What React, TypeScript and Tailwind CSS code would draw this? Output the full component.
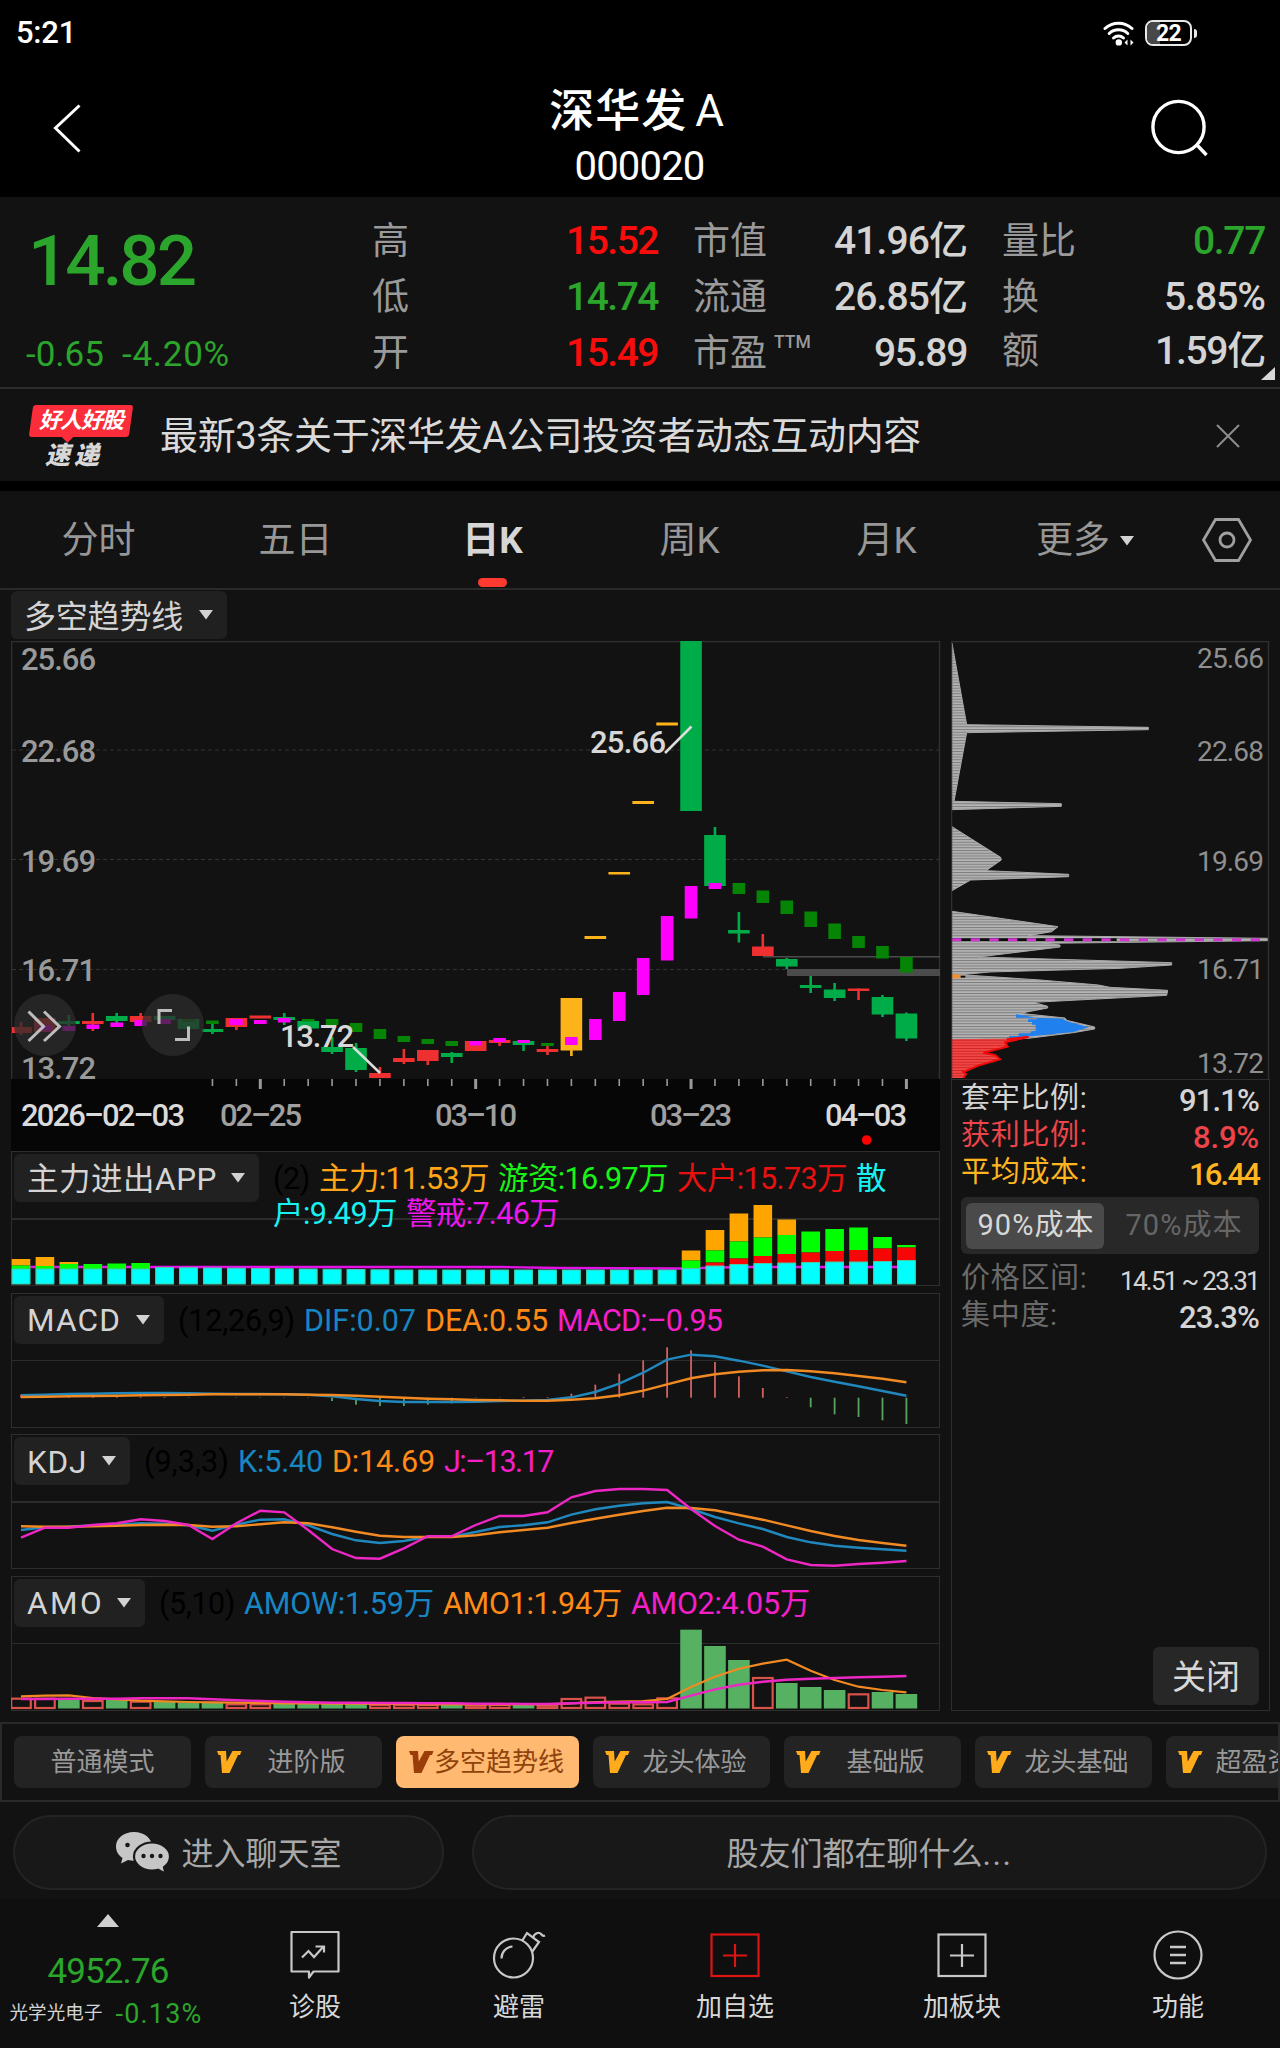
import { useLayoutEffect, useRef, useState } from "react";
import type { ReactNode } from "react";

const FONT = "font-['Roboto','Noto_Sans_CJK_SC',sans-serif]";

/** One line of text whose letter spacing is tuned so that it is `w` pixels wide. */
function Fit({ w, className = "", children }: { w: number; className?: string; children: string }) {
  const ref = useRef<HTMLSpanElement>(null);
  const [gap, setGap] = useState(0);
  useLayoutEffect(() => {
    const el = ref.current;
    if (!el) return;
    el.style.letterSpacing = "0px";
    setGap((w - el.getBoundingClientRect().width) / children.length);
    el.style.letterSpacing = "";
  }, [w, children]);
  return (
    <span ref={ref} className={`inline-block whitespace-pre ${className}`} style={{ letterSpacing: `${gap}px` }}>
      {children}
    </span>
  );
}

const X = (i: number) => 21 + 23.93 * i;

/* ---------- header ---------- */

function StatusBar() {
  return (
    <div className="flex h-[66px] items-center justify-between pl-4 pr-[83px] text-white">
      <Fit w={60} className="text-[31px] font-medium">5:21</Fit>
      <div className="flex items-center gap-[10px]">
        <svg width="32" height="26" viewBox="0 0 32 26" fill="none" stroke="#fff" strokeWidth="3" strokeLinecap="round">
          <path d="M2 8.5a20 20 0 0 1 27 0" />
          <path d="M6.2 13.5a13.5 13.5 0 0 1 18.6 0" />
          <path d="M10.5 18a7.5 7.5 0 0 1 10 0" />
          <circle cx="15.8" cy="22.4" r="1.7" fill="#fff" />
          <path d="M24.5 19.5l-3 3 3 3zM27.5 19.5l3 3-3 3z" fill="#fff" stroke="none" />
        </svg>
        <div className="flex items-center gap-[2px]">
          <div className="relative flex h-[26px] w-[47px] items-center justify-center overflow-hidden rounded-[8px] border-2 border-[#e8e8e8] text-[23px] font-bold">
            <div className="absolute inset-y-0 left-0 w-[13px] bg-[#484848]" />
            <Fit w={25} className="relative leading-none">22</Fit>
          </div>
          <div className="h-[9px] w-[3px] rounded-r bg-[#e8e8e8]" />
        </div>
      </div>
    </div>
  );
}

function TitleBar() {
  return (
    <div className="flex h-[131px] items-start justify-between pl-[52px] pr-[70px] text-white">
      <svg className="mt-[36px]" width="32" height="52" viewBox="0 0 32 52" fill="none" stroke="#fff" strokeWidth="3">
        <path d="M27.5 3.5L3.5 26l24 23.5" />
      </svg>
      <div className="flex flex-col items-center pl-[39px] pt-[17px]">
        <div className="flex h-[56px] items-center gap-[8px] text-[45px] font-medium leading-none">
          <Fit w={138}>深华发</Fit>
          <span className="text-[44px] font-normal">A</span>
        </div>
        <Fit w={130} className="ml-[6px] mt-[8px] text-[40px] leading-[40px]">000020</Fit>
      </div>
      <svg className="mt-[32px]" width="60" height="62" viewBox="0 0 60 62" fill="none" stroke="#fff" strokeWidth="3.4">
        <circle cx="28.500" cy="29" r="25.6" />
        <path d="M46.500 46.500l10 10.500" />
      </svg>
    </div>
  );
}

type Quote = { label: string; value: string; w: number; tone: string; sup?: string };
const quotes: Quote[][] = [
  [
    { label: "高", value: "15.52", w: 92, tone: "text-[#f80c0c]" },
    { label: "低", value: "14.74", w: 92, tone: "text-[#2ba52b]" },
    { label: "开", value: "15.49", w: 92, tone: "text-[#f80c0c]" },
  ],
  [
    { label: "市值", value: "41.96亿", w: 133, tone: "text-[#d4d4d4]" },
    { label: "流通", value: "26.85亿", w: 133, tone: "text-[#d4d4d4]" },
    { label: "市盈", value: "95.89", w: 93, tone: "text-[#d4d4d4]", sup: "TTM" },
  ],
  [
    { label: "量比", value: "0.77", w: 72, tone: "text-[#2ba52b]" },
    { label: "换", value: "5.85%", w: 101, tone: "text-[#d4d4d4]" },
    { label: "额", value: "1.59亿", w: 110, tone: "text-[#d4d4d4]" },
  ],
];

function QuotePanel() {
  const cols = ["w-[286px]", "w-[274px]", "w-[263px]"];
  return (
    <section className="relative flex h-[192px] border-b-2 border-[#2c2c2c] bg-[#121212]">
      <div className="w-[372px] pl-[28px] text-[#2ba52b]">
        <Fit w={166} className="mt-[28px] text-[71px] font-medium leading-[72px]">14.82</Fit>
        <div className="-ml-[2px] mt-[40px] flex gap-[18px] text-[35px] leading-[36px]">
          <Fit w={78}>-0.65</Fit>
          <Fit w={108}>-4.20%</Fit>
        </div>
      </div>
      <div className="flex gap-[35px] pt-[16px]">
        {quotes.map((col, c) => (
          <div key={c} className={cols[c]}>
            {col.map((q, r) => (
              <div key={q.label} className={`flex h-[56px] items-center justify-between text-[39px] leading-none ${c === 2 && r === 2 ? "-mt-[2px]" : ""}`}>
                <span className="flex items-start text-[37px] text-[#9a9a9a]">
                  {q.label}
                  {q.sup && <span className="ml-[7px] -mt-px text-[17.500px] font-medium">{q.sup}</span>}
                </span>
                <Fit w={q.w} className={`font-medium ${q.tone}`}>{q.value}</Fit>
              </div>
            ))}
          </div>
        ))}
      </div>
      <svg className="absolute bottom-[7px] right-[5px]" width="14" height="13" viewBox="0 0 14 13">
        <path d="M14 0v13H0z" fill="#d8d8d8" />
      </svg>
    </section>
  );
}

function NewsBar() {
  return (
    <section className="flex h-[92px] items-center bg-[#121212] pl-[29px] pt-[2px]">
      <div className="flex w-[104px] flex-col items-center pt-[2px]">
        <div className="relative flex h-[32px] w-[100px] items-center justify-center">
          <div className="absolute inset-0 -skew-x-[8deg] rounded-[3px] bg-[#fb2d3a]" />
          <div className="absolute -bottom-[4px] left-[32px] size-[9px] rotate-45 bg-[#fb2d3a]" />
          <span className="relative text-[22px] font-bold italic leading-none tracking-[-1px] text-white">好人好股</span>
        </div>
        <Fit w={58} className="mt-[6px] -ml-[14px] text-[25px] font-black italic leading-[26px] text-[#d8d8d8]">速递</Fit>
      </div>
      <Fit w={761} className="ml-[27px] text-[38px] leading-none text-[#dadada]">最新3条关于深华发A公司投资者动态互动内容</Fit>
      <svg className="ml-auto mr-[39px]" width="26" height="26" viewBox="0 0 26 26" stroke="#8c8c8c" strokeWidth="2">
        <path d="M2 2l22 22M24 2L2 24" />
      </svg>
    </section>
  );
}

function Caret({ className = "" }: { className?: string }) {
  return (
    <svg className={className} width="14" height="10" viewBox="0 0 14 10">
      <path d="M0 0h14L7 9.500z" fill="#d2d2d2" />
    </svg>
  );
}

function Tabs() {
  return (
    <nav className="mt-[10px] flex h-[99px] items-center border-b-2 border-[#2a2a2a] bg-[#121212] text-[37px] leading-none text-[#979797]">
      {["分时", "五日", "日K", "周K", "月K"].map((t) => (
        <div key={t} className="relative flex h-full w-[197px] items-center justify-center pt-[2px]">
          <span className={t === "日K" ? "font-bold text-[#d6d6d6]" : ""}>{t}</span>
          {t === "日K" && <div className="absolute bottom-px h-[9px] w-[29px] rounded-full bg-[#fd3a30]" />}
        </div>
      ))}
      <div className="ml-[51px] flex items-center gap-[10px] pt-[2px]">
        更多
        <Caret />
      </div>
      <svg className="ml-[67px]" width="52" height="46" viewBox="0 0 52 46" fill="none" stroke="#a0a0a0" strokeWidth="2.800">
        <path d="M14.500 2.500h23L49.500 23 37.500 43.500h-23L2.500 23z" />
        <circle cx="26" cy="23" r="7" />
      </svg>
    </nav>
  );
}

/* ---------- candlestick chart ---------- */

type Candle = { i: number; c: string; b: [number, number]; w?: [number, number] };
const R = "#ee3030";
const G = "#00ac48";
const O = "#ffb31a";
const candles: Candle[] = [
  { i: 0, c: R, b: [1027, 1033], w: [1022, 1035] },
  { i: 1, c: R, b: [1018, 1032] },
  { i: 2, c: G, b: [1021, 1024], w: [1015, 1031] },
  { i: 3, c: R, b: [1021, 1024], w: [1013, 1031] },
  { i: 4, c: G, b: [1016, 1021], w: [1013, 1025] },
  { i: 5, c: R, b: [1016, 1022], w: [1013, 1022] },
  { i: 6, c: G, b: [1016, 1020] },
  { i: 7, c: G, b: [1019, 1029] },
  { i: 8, c: G, b: [1029, 1032], w: [1024, 1034] },
  { i: 9, c: R, b: [1018, 1027], w: [1018, 1030] },
  { i: 10, c: R, b: [1015.5, 1018.5] },
  { i: 11, c: G, b: [1017, 1020], w: [1013, 1025] },
  { i: 12, c: G, b: [1021, 1028.5] },
  { i: 13, c: G, b: [1047, 1052], w: [1037, 1054] },
  { i: 14, c: G, b: [1048, 1070], w: [1043, 1072] },
  { i: 15, c: R, b: [1073, 1078], w: [1067, 1078] },
  { i: 16, c: R, b: [1058, 1062], w: [1049, 1064] },
  { i: 17, c: R, b: [1050, 1061], w: [1050, 1065] },
  { i: 18, c: G, b: [1053, 1057], w: [1052, 1063] },
  { i: 19, c: R, b: [1041, 1051] },
  { i: 20, c: R, b: [1040, 1043], w: [1038, 1046] },
  { i: 21, c: G, b: [1041, 1045], w: [1040, 1051] },
  { i: 22, c: R, b: [1049, 1052], w: [1044, 1055] },
  { i: 23, c: O, b: [998, 1050.5], w: [998, 1056] },
  { i: 24, c: O, b: [936, 939] },
  { i: 25, c: O, b: [872, 874.5] },
  { i: 26, c: O, b: [801, 804] },
  { i: 27, c: O, b: [722.5, 725.5] },
  { i: 28, c: G, b: [641, 811] },
  { i: 29, c: G, b: [835, 886], w: [827, 886] },
  { i: 30, c: G, b: [930, 933.5], w: [912, 942.5] },
  { i: 31, c: R, b: [946.5, 956], w: [934, 956] },
  { i: 32, c: G, b: [959, 966.5], w: [958, 969] },
  { i: 33, c: G, b: [985, 988], w: [976, 993] },
  { i: 34, c: G, b: [989.5, 998], w: [983, 1001] },
  { i: 35, c: R, b: [988.5, 991], w: [988.5, 1000] },
  { i: 36, c: G, b: [997, 1014.5], w: [995, 1017] },
  { i: 37, c: G, b: [1013.5, 1038.5], w: [1012.5, 1041] },
];
const M = "#ff00ff";
const D = "#058405";
const trend: [number, string, number, number][] = [
  [1, M, 1025, 1031], [2, M, 1026, 1031], [3, M, 1024.5, 1029], [4, M, 1022.5, 1027], [5, M, 1020, 1026], [6, M, 1019, 1024],
  [7, D, 1019, 1022], [8, D, 1020.5, 1024], [9, M, 1019, 1025], [10, M, 1020, 1024], [11, M, 1018, 1022.5],
  [12, D, 1019, 1021.5], [13, D, 1019, 1025], [14, D, 1023, 1032], [15, D, 1029, 1039], [16, D, 1036, 1042],
  [17, D, 1039, 1044], [18, D, 1041, 1046], [19, M, 1041, 1045.5], [20, M, 1038, 1042], [21, M, 1040, 1043], [22, D, 1043, 1046],
  [23, M, 1037, 1045], [24, M, 1019, 1040], [25, M, 992, 1021], [26, M, 958, 995], [27, M, 916, 960.5], [28, M, 886, 918.5],
  [29, M, 883, 889], [30, D, 883, 894], [31, D, 890.5, 903], [32, D, 900.5, 914], [33, D, 911.5, 927], [34, D, 923.5, 939],
  [35, D, 936, 948], [36, D, 946, 958.5], [37, D, 957, 972.5],
];
const leftAxis: [string, number][] = [["25.66", 658.5], ["22.68", 751], ["19.69", 860.5], ["16.71", 969.5], ["13.72", 1068]];
const dates: [string, number, number, string][] = [
  ["2026-02-03", 21, 164, "#dadada"], ["02-25", 220, 82, "#a0a0a0"], ["03-10", 435, 82, "#a0a0a0"],
  ["03-23", 650, 82, "#a0a0a0"], ["04-03", 825, 82, "#dadada"],
];

function Candles() {
  return (
    <svg className="block" width="930" height="510" viewBox="11 641 930 510" fontFamily="Roboto, sans-serif" fontSize="31" fontWeight="500">
      <rect x="11" y="1079" width="929" height="72" fill="#060606" />
      <path d="M11.500 1079V641.500H939.500V1079" fill="none" stroke="#303030" strokeWidth="1.500" />
      <path d="M12 750H939M12 859.500H939M12 969.500H939" stroke="#333" strokeWidth="1" strokeDasharray="4 3" />
      <rect x="787" y="969" width="153" height="7" fill="#4b4b4b" />
      <rect x="763" y="956" width="177" height="1.500" fill="#4b4b4b" />
      {candles.map(({ i, c, b, w }) => {
        const left = Math.max(12, X(i) - 10.8);
        return (
          <g key={i} fill={c}>
            {w && <rect x={X(i) - 1.3} y={w[0]} width="2.6" height={w[1] - w[0]} />}
            <rect x={left} y={b[0]} width={X(i) + 10.8 - left} height={b[1] - b[0]} />
          </g>
        );
      })}
      {trend.map(([i, c, a, b]) => (
        <rect key={i} x={X(i) - 6.3} y={a} width="12.600" height={b - a} fill={c} />
      ))}
      {Array.from({ length: 30 }, (_, k) => k + 8).map((i) => {
        const major = [10, 19, 28, 37].includes(i);
        return <rect key={i} x={X(i) - (major ? 1.5 : 0.8)} y="1079" width={major ? 3 : 1.6} height={major ? 10 : 7} fill="#999" />;
      })}
      {leftAxis.map(([t, y]) => (
        <text key={t} x="21" y={y + 11} textLength="75" fill="#999">{t}</text>
      ))}
      {dates.map(([t, x, w, c]) => (
        <text key={t} x={x} y="1125.500" textLength={w} fill={c}>{t.replaceAll("-", "–")}</text>
      ))}
      <text x="590" y="753" textLength="76" fill="#d8d8d8">25.66</text>
      <text x="280" y="1047" textLength="74" fill="#d8d8d8">13.72</text>
      <path d="M665 753L691.500 726.500M353 1047L380 1073" stroke="#dcdcdc" strokeWidth="2.500" />
      <circle cx="866.700" cy="1140" r="4.800" fill="#f00" />
      <g fill="none" stroke="#bdbdbd" strokeWidth="3">
        <circle cx="45" cy="1025" r="31" fill="#2c2c2c" fillOpacity="0.75" stroke="none" />
        <path d="M28.500 1011.500l15 15-15 14.500M44 1011.500l15.500 15-15.500 14.500" />
        <circle cx="173" cy="1025" r="31" fill="#2c2c2c" fillOpacity="0.75" stroke="none" />
        <path d="M159 1024v-13.500h13M175 1039.500h13.500v-13" />
      </g>
    </svg>
  );
}

/* ---------- indicator panels ---------- */

const line = (ys: number[], f: (v: number) => number) => ys.map((v, i) => `${X(i).toFixed(1)},${f(v).toFixed(1)}`).join(" ");

type Legend = { t: string; w: number; c: string };

function Indicator({ name, w, legend, second, children, nameW }: { name: string; w: string; nameW: number; legend: Legend[]; second?: Legend[]; children: ReactNode }) {
  return (
    <div className="relative h-[135px] w-[929px] border border-[#2e2e2e]">
      <div className="absolute inset-x-0 top-[66px] h-[1.500px] bg-[#2c2c2c]" />
      <svg className="absolute -left-px -top-px" width="929" height="135" viewBox="11 0 929 135">{children}</svg>
      <div className="relative flex pl-[2px] pt-[2px]">
        <div className={`flex h-[48px] items-center justify-between rounded-md bg-[#212121] pl-[13px] pr-[14px] text-[31.500px] leading-none text-[#d4d4d4] ${w}`}>
          <Fit w={nameW} className="pt-[3px]">{name}</Fit>
          <Caret />
        </div>
        <div className="ml-[14px] flex flex-col pt-[7px] text-[30.500px] leading-[35px]">
          {[legend, second ?? []].map((row, r) => (
            <div key={r} className="flex gap-[9px]">
              {row.map((l) => (
                <Fit key={l.t} w={l.w} className={l.c}>{l.t}</Fit>
              ))}
            </div>
          ))}
        </div>
      </div>
    </div>
  );
}

const BLUE = "text-[#1986c4]";
const ORANGE = "text-[#ff8b17]";
const PINK = "text-[#f41fc9]";

// [cyan, red, green, orange] tops of each stacked column
const stacks: number[][] = [
  [118, 118, 114.5, 108], [118, 118, 115, 106], [118, 118, 113, 111], [118, 118, 113, 113], [118, 118, 112.5, 112.5], [118, 118, 112, 112],
  ...Array.from({ length: 22 }, (_, k) => { const y = 116.5 + Math.min(k, 10) * 0.25; return [y, y, y, y]; }),
  [117.5, 117.5, 109.5, 99.5], [115, 111.5, 99.5, 79], [113.5, 107.5, 90.5, 62.5], [112.5, 105, 86.5, 54], [112, 103, 84, 68.5],
  [111.5, 101.5, 80.5, 80.5], [111, 100, 78, 78], [111, 99, 76.5, 76.5], [110.5, 97.5, 86, 86], [109.5, 96.5, 94, 94],
];

function MainForce() {
  return (
    <Indicator
      name="主力进出APP" w="w-[245px]" nameW={190}
      legend={[
        { t: "(2)", w: 37, c: "text-black" }, { t: "主力:11.53万", w: 170, c: "text-[#ffa516]" }, { t: "游资:16.97万", w: 170, c: "text-[#17f517]" },
        { t: "大户:15.73万", w: 170, c: "text-[#e91010]" }, { t: "散", w: 30, c: "text-[#16f2f2]" },
      ]}
      second={[{ t: "户:9.49万", w: 124, c: "text-[#16f2f2]" }, { t: "警戒:7.46万", w: 153, c: "text-[#ee16ee]" }]}
    >
      <polyline points={`12,116 500,116 560,117 680,117.500 740,116 907,116`} fill="none" stroke="#e412e4" strokeWidth="2.400" />
      {stacks.map(([c, r, g, o], i) => (
        <g key={i}>
          <rect x={X(i) - 9.3} y={o} width="18.600" height={g - o} fill="#ffa500" />
          <rect x={X(i) - 9.3} y={g} width="18.600" height={r - g} fill="#0f0" />
          <rect x={X(i) - 9.3} y={r} width="18.600" height={c - r} fill="#f80606" />
          <rect x={X(i) - 9.3} y={c} width="18.600" height={133 - c} fill="#00ffff" />
          <rect x={X(i) - 8.8} y={c} width="17.600" height={133 - c} fill="none" stroke="#4cc9a4" strokeWidth="1" />
        </g>
      ))}
    </Indicator>
  );
}

const dif = [765, 763, 761, 760, 759, 758, 758, 759, 760, 761, 761, 762, 763, 768, 776, 782, 785, 785, 785, 784, 782, 781, 779, 771, 755, 730, 697, 658, 643, 648, 661, 676, 693, 710, 724, 738, 752, 766];
const dea = [770, 769, 768, 767, 766, 765, 764, 763, 762, 762, 762, 762, 763, 764, 766, 769, 772, 775, 777, 779, 780, 781, 781, 778, 774, 765, 751, 732, 714, 702, 694, 690, 689, 693, 699, 707, 715, 726];
const hist = [763, 762, 763, 766, 768, 769, 770, 773, 772, 773, 773, 773, 773, 782, 793, 797, 797, 793, 789, 771, 771, 770, 770, 760, 733, 700, 660, 621, 630, 665, 708, 743, 770, 801, 822, 830, 840, 851];

function Macd() {
  const f = (v: number) => (v - 458) / 3;
  return (
    <Indicator name="MACD" w="w-[150px]" nameW={94}
      legend={[{ t: "(12,26,9)", w: 117, c: "text-black" }, { t: "DIF:0.07", w: 112, c: BLUE }, { t: "DEA:0.55", w: 123, c: ORANGE }, { t: "MACD:–0.95", w: 165, c: PINK }]}
    >
      {hist.map((v, i) => (
        <rect key={i} x={X(i) - 0.9} y={f(Math.min(v, 772))} width="1.800" height={Math.abs(v - 772) / 3} fill={v < 772 ? "#d0625f" : "#57a45e"} />
      ))}
      <polyline points={line(dif, f)} fill="none" stroke="#2188be" strokeWidth="2.400" />
      <polyline points={line(dea, f)} fill="none" stroke="#f18a23" strokeWidth="2.400" />
    </Indicator>
  );
}

const kdjJ = [323, 293, 293, 285, 280, 268, 273, 285, 327, 280, 242, 247, 300, 357, 384, 386, 355, 319, 319, 285, 258, 258, 247, 202, 183, 177, 177, 180, 237, 288, 329, 350, 388, 405, 407, 402, 398, 393];
const kdjK = [300, 292, 290, 286, 284, 280, 281, 286, 302, 284, 269, 268, 286, 312, 331, 339, 333, 320, 320, 306, 291, 286, 277, 254, 238, 227, 220, 216, 237, 261, 280, 297, 321, 337, 347, 353, 358, 362];
const kdjD = [289, 290, 290, 289, 287, 285, 284, 285, 290, 289, 283, 277, 280, 292, 305, 317, 321, 321, 321, 316, 307, 300, 293, 279, 266, 254, 243, 233, 234, 241, 255, 269, 286, 303, 318, 330, 339, 347];

function Kdj() {
  const f = (v: number) => (v - 12) / 3;
  return (
    <Indicator name="KDJ" w="w-[116px]" nameW={60}
      legend={[{ t: "(9,3,3)", w: 85, c: "text-black" }, { t: "K:5.40", w: 85, c: BLUE }, { t: "D:14.69", w: 103, c: ORANGE }, { t: "J:–13.17", w: 109, c: PINK }]}
    >
      <polyline points={line(kdjK, f)} fill="none" stroke="#2188be" strokeWidth="2.400" />
      <polyline points={line(kdjD, f)} fill="none" stroke="#f18a23" strokeWidth="2.400" />
      <polyline points={line(kdjJ, f)} fill="none" stroke="#ee27c4" strokeWidth="2.400" />
    </Indicator>
  );
}

const amo = [803, 803, 810, 810, 810, 812, 815, 817, 818, 820, 820, 820, 822, 820, 820, 822, 822, 822, 824, 824, 822, 824, 824, 804, 800, 818, 820, 802, 599, 648, 690, 741, 759, 771, 780, 790, 786, 792];
const amoUp = [0, 1, 3, 5, 9, 10, 15, 16, 17, 19, 20, 22, 23, 24, 25, 26, 27, 31, 35];
const amo1 = [799, 797, 796, 804, 808, 812, 814, 816, 817, 818, 819, 820, 820, 821, 821, 822, 822, 823, 823, 823, 823, 823, 823, 820, 816, 815, 813, 807, 771, 740, 716, 701, 689, 722, 750, 770, 780, 787];
const amo2 = [807, 807, 806, 806, 806, 805, 805, 805, 808, 811, 813, 815, 817, 818, 818, 819, 819, 820, 820, 821, 821, 822, 822, 820, 818, 817, 817, 816, 797, 778, 764, 755, 749, 746, 744, 742, 740, 738];

function Amo() {
  const f = (v: number) => (v - 438) / 3;
  return (
    <Indicator name="AMO" w="w-[131px]" nameW={77}
      legend={[{ t: "(5,10)", w: 76, c: "text-black" }, { t: "AMOW:1.59万", w: 190, c: BLUE }, { t: "AMO1:1.94万", w: 179, c: ORANGE }, { t: "AMO2:4.05万", w: 179, c: PINK }]}
    >
      {amo.map((v, i) =>
        amoUp.includes(i) ? (
          <rect key={i} x={X(i) - 9.8} y={f(v) + 1} width="19.600" height={131 - f(v)} fill="none" stroke="#d9534a" strokeWidth="2.200" />
        ) : (
          <rect key={i} x={X(i) - 10.8} y={f(v)} width="21.600" height={132.5 - f(v)} fill="#56b262" />
        )
      )}
      <polyline points={line(amo1, f)} fill="none" stroke="#f18a23" strokeWidth="2.200" />
      <polyline points={line(amo2, f)} fill="none" stroke="#ee27c4" strokeWidth="2.400" />
    </Indicator>
  );
}

/* ---------- cost distribution ---------- */

const rightAxis: [string, number][] = [["25.66", 657.7], ["22.68", 751], ["19.69", 860.5], ["16.71", 969], ["13.72", 1063]];

function CostChart() {
  return (
    <svg className="block" width="319" height="438" viewBox="951 641 319 438">
      <defs>
        <pattern id="grey" width="8" height="8.250" patternUnits="userSpaceOnUse">
          <rect width="8" height="8.250" fill="#b4b4b4" />
          <rect width="8" height="3" fill="#7d7d7d" />
        </pattern>
        <pattern id="red" width="8" height="8.250" patternUnits="userSpaceOnUse">
          <rect width="8" height="8.250" fill="#f24848" />
          <rect width="8" height="3" fill="#d02424" />
        </pattern>
      </defs>
      <g transform="translate(940 630) scale(0.33333)">
        <g fill="url(#grey)" stroke="#a9a9a9" strokeWidth="3">
          <path d="M36 40L80 284 625 292V299L80 308 42 514 364 521V529L36 539z" />
          <path d="M36 590L182 682 184 690 138 722 386 733V740L92 750 36 782z" />
          <path d="M36 844L354 890 335 905 265 917 983 925V932L310 940 360 945V951L115 981 695 998V1005L540 1015 150 1026 62 1034 300 1050 475 1065 510 1072 683 1081 680 1096 280 1117 323 1129V1134L240 1150 375 1164 380 1171 464 1191V1197L400 1208 265 1225 36 1228z" />
        </g>
        <path d="M228 1153L250 1156 290 1163 368 1166 378 1173 446 1192 400 1206 207 1225V1218H236V1210H270L274 1204 287 1202V1184H276V1176H264V1168H290V1163H228z" fill="#2080ee" />
        <path d="M36 1228L200 1226 265 1218V1224L195 1237 203 1250 130 1268 165 1275 180 1288 115 1307 70 1326 78 1332 70 1344H36z" fill="url(#red)" />
        <path d="M200 1228L265 1221 195 1237 203 1250 130 1268 165 1275 180 1288 115 1307 70 1326 78 1332 70 1344" fill="none" stroke="#f00808" strokeWidth="6" />
        <rect x="36" y="1033" width="26" height="12" fill="#f09038" />
        <rect x="62" y="1037" width="14" height="6" fill="#0a0a0a" />
        <path d="M36 929H530" stroke="#0c0c0c" strokeWidth="8" />
        <path d="M36 929H983" stroke="#cf35cf" strokeWidth="9" strokeDasharray="28 28" />
      </g>
      <g fontFamily="Roboto, sans-serif" fontSize="28" fill="#8f8f8f">
        {rightAxis.map(([t, y]) => (
          <text key={t} x="1197" y={y + 10} textLength="67">{t}</text>
        ))}
      </g>
      <path d="M951.500 1079V641.500H1268.500V1079" fill="none" stroke="#303030" strokeWidth="1.500" />
    </svg>
  );
}

function Stat({ label, value, w, tone, valueTone, small }: { label: string; value: string; w: number; tone: string; valueTone: string; small?: boolean }) {
  return (
    <div className="flex h-[37px] items-center justify-between leading-none">
      <span className={`text-[29px] tracking-[0.7px] ${tone}`}>{label}:</span>
      <Fit w={w} className={`relative top-[2px] ${small ? "text-[26px]" : "text-[31px]"} ${valueTone}`}>{value}</Fit>
    </div>
  );
}

function CostPanel() {
  return (
    <aside className="flex w-[319px] flex-col">
      <CostChart />
      <div className="flex h-[632px] flex-col border border-[#2e2e2e] pl-[9px] pr-[10px]">
        <Stat label="套牢比例" value="91.1%" w={80} tone="text-[#d4d4d4]" valueTone="text-[#d4d4d4] font-medium" />
        <Stat label="获利比例" value="8.9%" w={66} tone="text-[#ec4449]" valueTone="text-[#ec4449] font-medium" />
        <Stat label="平均成本" value="16.44" w={70} tone="text-[#ffb520]" valueTone="text-[#ffb520] font-medium" />
        <div className="mb-[6px] mt-[6px] flex h-[57px] items-center rounded-md bg-[#282828] px-[5px] text-[29px] leading-none">
          <div className="flex h-[46px] w-[138px] items-center justify-center rounded-md bg-[#4a4a4a] pl-[2px] text-[#d8d8d8]"><Fit w={117}>90%成本</Fit></div>
          <div className="flex flex-1 justify-center pl-[10px] text-[#666]"><Fit w={117}>70%成本</Fit></div>
        </div>
        <Stat label="价格区间" value="14.51 ~ 23.31" w={139} tone="text-[#6a6a6a]" valueTone="text-[#d4d4d4]" small />
        <Stat label="集中度" value="23.3%" w={80} tone="text-[#6a6a6a]" valueTone="text-[#d4d4d4] font-medium" />
        <div className="mb-[5px] mt-auto flex h-[58px] w-[106px] items-center justify-center self-end rounded-md bg-[#272727] pt-[2px] text-[34px] text-[#d8d8d8]">关闭</div>
      </div>
    </aside>
  );
}

/* ---------- bottom ---------- */

function VMark({ color }: { color: string }) {
  return (
    <svg className="shrink-0" width="26" height="24" viewBox="0 0 26 24">
      <path d="M1 1h9l.7 10.500L16.500 1H25.500l-1.500 4h-2L13.500 23H6L4.500 5H2.500z" fill={color} />
    </svg>
  );
}

function ModeStrip() {
  const items = ["普通模式", "进阶版", "多空趋势线", "龙头体验", "基础版", "龙头基础", "超盈资金"];
  return (
    <div className="mt-[11px] flex h-[80px] items-center gap-[14px] overflow-hidden border-2 border-[#2a2a2a] bg-[#121212] pl-[12px] text-[26px] leading-none">
      {items.map((t, i) =>
        i === 2 ? (
          <div key={t} className="flex h-[52px] w-[183px] shrink-0 items-center rounded-lg bg-[#ffb970] pl-[12px] text-[#91430c]">
            <VMark color="#9a3d08" />
            {t}
          </div>
        ) : (
          <div key={t} className="flex h-[52px] w-[177px] shrink-0 items-center rounded-lg bg-[#232323] px-[11px] text-[#999]">
            {i > 0 && <VMark color="#ffab1c" />}
            <span className={i === 0 ? "flex-1 text-center" : "flex-1 whitespace-nowrap text-center"}>{t}</span>
          </div>
        )
      )}
    </div>
  );
}

function ChatRow() {
  return (
    <div className="mt-[13px] flex gap-[28px] px-[13px] text-[32px] leading-none text-[#a8a8a8]">
      <div className="flex h-[75px] w-[431px] items-center justify-center gap-[10px] rounded-full border-2 border-[#242424] bg-[#181818]">
        <svg width="56" height="44" viewBox="0 0 56 44">
          <path d="M19 1C8.500 1 1 7.500 1 15.500c0 5 2.600 9 6.500 11.500L6 32.500l7-3.500c2 .6 4 .8 6 .8 10.500 0 18-6.300 18-14.300S29.500 1 19 1z" fill="#c6c6c6" />
          <path d="M37 11.500c-10 0-18 6.500-18 14s8 14 18 14c2 0 4-.3 6-.8l7.500 4-1.500-6.500c4-2.700 6-6.500 6-10.700 0-7.500-8-14-18-14z" fill="#c6c6c6" stroke="#181818" strokeWidth="2.200" />
          <g fill="#181818"><circle cx="12.500" cy="14" r="2.300" /><circle cx="28.500" cy="25" r="2.200" /><circle cx="37" cy="25" r="2.200" /><circle cx="45.500" cy="25" r="2.200" /></g>
        </svg>
        <span className="pt-[3px]">进入聊天室</span>
      </div>
      <div className="flex h-[75px] flex-1 items-center justify-center rounded-full border-2 border-[#242424] bg-[#181818] pt-[2px]">
        <Fit w={256}>股友们都在聊什么</Fit>
        <Fit w={30}>...</Fit>
      </div>
    </div>
  );
}

function NavItem({ label, className, children }: { label: string; className: string; children: ReactNode }) {
  return (
    <div className={`flex shrink-0 flex-col items-center ${className}`}>
      <svg width="56" height="54" viewBox="0 0 56 54" fill="none" stroke="#c8c8c8" strokeWidth="2.200">{children}</svg>
      <span className="mt-[6px] whitespace-nowrap text-[26px] leading-[36px] text-[#d8d8d8]">{label}</span>
    </div>
  );
}

function BottomNav() {
  return (
    <footer className="mt-[9px] flex flex-1 overflow-hidden bg-[#0f0f0f]">
      <div className="flex w-[212px] shrink-0 flex-col items-center pt-[15px]">
        <svg className="ml-[4px]" width="22" height="13" viewBox="0 0 22 13"><path d="M11 0l11 13H0z" fill="#cfcfcf" /></svg>
        <Fit w={121} className="ml-[4px] mt-[25px] text-[35px] leading-[40px] text-[#2ba52b]">4952.76</Fit>
        <div className="mt-[2px] flex items-center gap-[13px]">
          <Fit w={93} className="text-[18.500px] text-[#d4d4d4]">光学光电子</Fit>
          <Fit w={87} className="text-[27px] text-[#2ba52b]">-0.13%</Fit>
        </div>
      </div>
      <div className="flex flex-1 pt-[30px]">
        <NavItem label="诊股" className="w-[206px]">
          <path d="M4.500 3h47v39.500H26.500L22 48.500V42.500H4.500z" strokeLinejoin="round" />
          <path d="M15 28.500l6.500-6.500 5.500 6 9.500-10.500M28.500 17.500H37v6" />
        </NavItem>
        <NavItem label="避雷" className="w-[202px]">
          <circle cx="22.500" cy="29" r="19.500" />
          <path d="M10.500 29.500C10.500 23 15 18 21.500 17.500M31 12l5-8 12 9-7 10M42 9c1-5 6-6.500 8-4 1.500 2 3 2 4 1.500" />
        </NavItem>
        <NavItem label="加自选" className="w-[230px]">
          <g stroke="#dd1414"><rect x="4.500" y="5.500" width="47" height="41.500" /><path d="M28 15v23M16 26.500h24" /></g>
        </NavItem>
        <NavItem label="加板块" className="w-[224px]">
          <rect x="4.500" y="5.500" width="47" height="41.500" />
          <path d="M28 15v23M16 26.500h24" />
        </NavItem>
        <NavItem label="功能" className="w-[208px]">
          <circle cx="28" cy="26" r="23.500" />
          <path d="M20 18h16M20 26h16M20 34h16" strokeWidth="2.600" />
        </NavItem>
      </div>
    </footer>
  );
}

export default function App() {
  return (
    <main className={`flex h-[2048px] w-[1280px] flex-col overflow-hidden bg-black ${FONT}`}>
      <StatusBar />
      <TitleBar />
      <QuotePanel />
      <NewsBar />
      <Tabs />
      <div className="flex flex-1 flex-col bg-[#121212]">
        <div className="flex h-[51px] pl-[11px] pt-px">
          <div className="flex h-[48px] w-[216px] items-center justify-between rounded-md bg-[#202020] pl-[13px] pr-[14px] text-[32px] leading-none text-[#d4d4d4]">
            <Fit w={159} className="pt-[3px]">多空趋势线</Fit>
            <Caret />
          </div>
        </div>
        <div className="flex gap-[10px] pl-[11px]">
          <div>
            <Candles />
            <div className="flex flex-col gap-[6.500px]">
              <MainForce />
              <Macd />
              <Kdj />
              <Amo />
            </div>
          </div>
          <CostPanel />
        </div>
        <ModeStrip />
        <ChatRow />
        <BottomNav />
      </div>
    </main>
  );
}
